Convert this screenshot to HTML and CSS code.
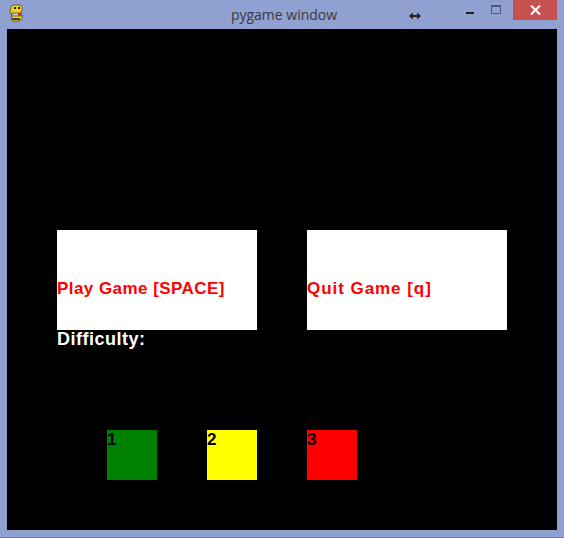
FILE: index.html
```html
<!DOCTYPE html>
<html>
<head>
<meta charset="utf-8">
<title>pygame window</title>
<link rel="stylesheet" href="styles.css">
</head>
<body>
<div class="window">
  <div class="titlebar">
    <div class="appicon">
      <svg width="16" height="18" viewBox="0 0 16 18">
        <path d="M4 1 L11 1 L13 3 L13 7 L11 9 L13 11 L13 15 L10 17 L4 17 L2 15 L3 11 L1 8 L2 3 Z" fill="#f2d21b" stroke="#5b4a00" stroke-width="0.8"/>
        <rect x="5" y="3" width="2" height="2" fill="#222"/>
        <rect x="9" y="3" width="2" height="2" fill="#222"/>
        <rect x="3" y="9" width="9" height="3" fill="#c8c8c8" stroke="#333" stroke-width="0.6"/>
        <rect x="9" y="9" width="3" height="3" fill="#c33"/>
        <rect x="3" y="14" width="8" height="2" fill="#444"/>
      </svg>
    </div>
    <div class="title">pygame window</div>
    <div class="controls">
      <div class="resize">
        <svg width="12" height="8" viewBox="0 0 12 8"><path d="M0 4 L4 0.5 L4 3 L8 3 L8 0.5 L12 4 L8 7.5 L8 5 L4 5 L4 7.5 Z" fill="#222"/></svg>
      </div>
      <div class="btn min"><span class="dash"></span></div>
      <div class="btn max"><span class="box"></span></div>
      <div class="btn close">
        <svg width="11" height="10" viewBox="0 0 11 10"><path d="M1 0.5 L10 9.5 M10 0.5 L1 9.5" stroke="#fff" stroke-width="2"/></svg>
      </div>
    </div>
  </div>
  <div class="client">
    <div class="buttons">
      <div class="menubtn"><span class="label">Play Game [SPACE]</span></div>
      <div class="menubtn"><span class="label label-wide">Quit Game [q]</span></div>
    </div>
    <div class="difficulty">Difficulty:</div>
    <div class="levels">
      <div class="level green">1</div>
      <div class="level yellow">2</div>
      <div class="level red">3</div>
    </div>
  </div>
</div>
</body>
</html>
```
FILE: styles.css
```css
html, body {
  margin: 0;
  padding: 0;
  background: #8fa0d1;
}
.window {
  width: 564px;
  height: 538px;
  background: #8fa0d1;
  box-sizing: border-box;
  border-bottom: 1px solid #6d7ba6;
  position: relative;
}
.titlebar {
  height: 29px;
  display: flex;
  align-items: flex-start;
  position: relative;
}
.appicon {
  width: 16px;
  height: 18px;
  margin: 4px 0 0 9px;
}
.title {
  position: absolute;
  left: 0;
  right: 0;
  top: 5px;
  text-align: center;
  font-family: "Open Sans", "Noto Sans", sans-serif;
  font-size: 14px;
  line-height: 20px;
  color: #3b3b3b;
  padding-left: 4px;
}
.controls {
  margin-left: auto;
  margin-right: 7px;
  display: flex;
  align-items: flex-start;
}
.resize {
  width: 12px;
  height: 8px;
  margin: 6px 36px 0 0;
}
.btn {
  height: 20px;
  display: flex;
  align-items: center;
  justify-content: center;
}
.min {
  width: 26px;
}
.dash {
  display: block;
  width: 8px;
  height: 2px;
  background: #222;
  margin-top: 6px;
}
.max {
  width: 26px;
  margin-right: 4px;
}
.box {
  display: block;
  width: 8px;
  height: 6px;
  border: 1px solid #4f5b7a;
  border-top-width: 2px;
  margin-top: -2px;
}
.close {
  width: 44px;
  background: #c75050;
}
.client {
  margin-left: 7px;
  width: 550px;
  height: 501px;
  background: #000;
  box-sizing: border-box;
  padding: 201px 0 0 50px;
  font-family: "Liberation Sans", Arial, sans-serif;
  font-weight: bold;
}
.buttons {
  display: flex;
  gap: 50px;
}
.menubtn {
  width: 200px;
  height: 100px;
  background: #fff;
  box-sizing: border-box;
  padding-top: 50px;
}
.label {
  display: block;
  color: #ff0000;
  font-size: 17px;
  line-height: 17px;
  letter-spacing: 0.45px;
}
.label-wide {
  letter-spacing: 0.95px;
}
.difficulty {
  color: #fff;
  font-size: 18px;
  line-height: 18px;
  letter-spacing: 0.5px;
  height: 18px;
}
.levels {
  display: flex;
  gap: 50px;
  margin: 82px 0 0 50px;
}
.level {
  width: 50px;
  height: 50px;
  box-sizing: border-box;
  padding-top: 1px;
  color: #000;
  font-size: 17px;
  line-height: 17px;
}
.green { background: #008000; }
.yellow { background: #ffff00; }
.red { background: #ff0000; }
```
